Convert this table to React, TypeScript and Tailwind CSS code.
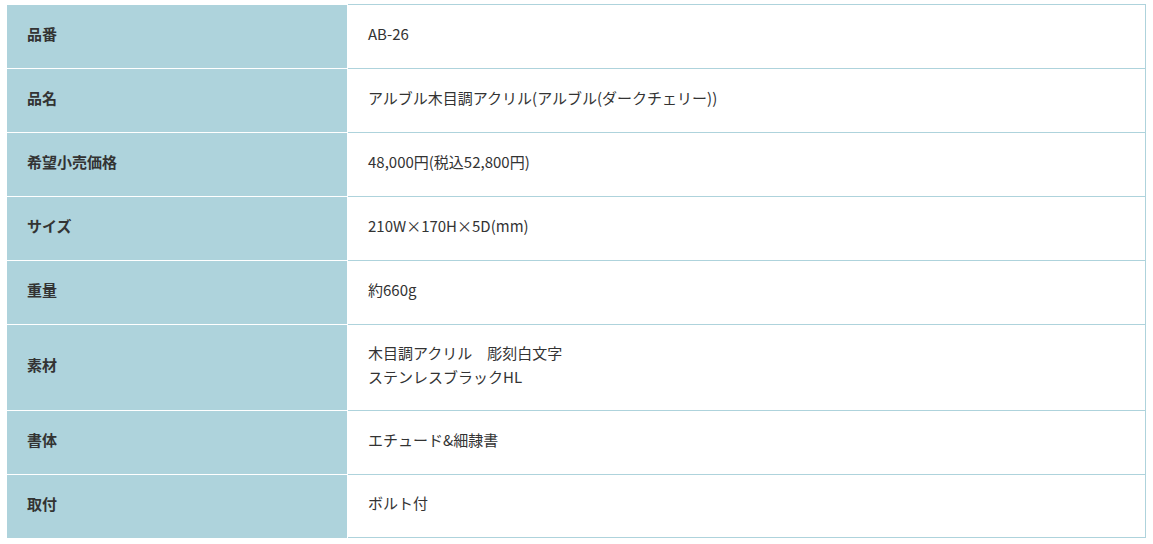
import React from "react";

const rows: { label: string; value: string[]; tall?: boolean }[] = [
  { label: "品番", value: ["AB-26"] },
  { label: "品名", value: ["アルブル木目調アクリル(アルブル(ダークチェリー))"] },
  { label: "希望小売価格", value: ["48,000円(税込52,800円)"] },
  { label: "サイズ", value: ["210W×170H×5D(mm)"] },
  { label: "重量", value: ["約660g"] },
  { label: "素材", value: ["木目調アクリル　彫刻白文字", "ステンレスブラックHL"], tall: true },
  { label: "書体", value: ["エチュード&細隷書"] },
  { label: "取付", value: ["ボルト付"] },
];

export default function App() {
  return (
    <div
      className="bg-white w-[1153px] h-[544px] pt-[4px] px-[7px] text-[#333333]"
      style={{ fontFamily: '"Noto Sans CJK JP", "Noto Sans", sans-serif' }}
    >
      <div className="flex flex-col w-[1139px]">
        {rows.map((r, i) => (
          <div key={i} className="flex">
            <div className="w-[341px] shrink-0 border-t border-r border-white bg-[#aed3dc] pl-[20px] pb-[6px] flex items-center">
              <span className="text-[15px] font-bold leading-[24px]">{r.label}</span>
            </div>
            <div
              className={
                "flex-1 border-t border-r border-[#aed3dc] pl-[20px] pb-[6px] flex flex-col justify-center " +
                (r.tall ? "h-[86px] " : "h-[64px] ") +
                (i === rows.length - 1 ? "border-b" : "")
              }
            >
              {r.value.map((v, j) => (
                <div key={j} className="text-[15px] leading-[24px]">
                  {v}
                </div>
              ))}
            </div>
          </div>
        ))}
      </div>
    </div>
  );
}
